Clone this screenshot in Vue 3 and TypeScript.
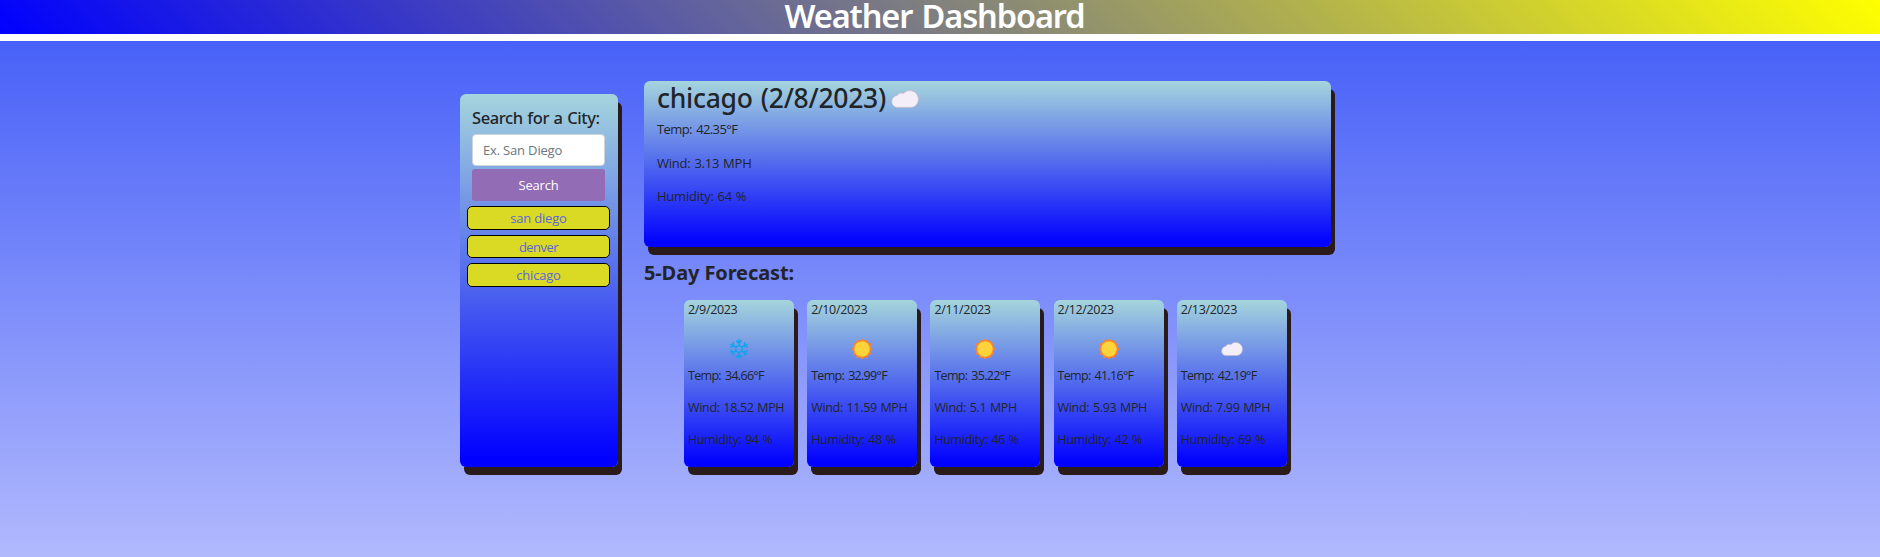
<script setup lang="ts">
import { ref } from 'vue'

type Sky = 'snow' | 'sun' | 'cloud'

interface Forecast {
  date: string
  sky: Sky
  temp: string
  wind: string
  humidity: number
}

const query = ref('')
const history = ref<string[]>(['san diego', 'denver', 'chicago'])
const forecast: Forecast[] = [
  { date: '2/9/2023', sky: 'snow', temp: '34.66', wind: '18.52', humidity: 94 },
  { date: '2/10/2023', sky: 'sun', temp: '32.99', wind: '11.59', humidity: 48 },
  { date: '2/11/2023', sky: 'sun', temp: '35.22', wind: '5.1', humidity: 46 },
  { date: '2/12/2023', sky: 'sun', temp: '41.16', wind: '5.93', humidity: 42 },
  { date: '2/13/2023', sky: 'cloud', temp: '42.19', wind: '7.99', humidity: 69 },
]

const arms = [0, 60, 120, 180, 240, 300]

// Twelve-pointed outline behind the sun disc
const sunPoints = Array.from({ length: 24 }, (_, i) => {
  const r = i % 2 ? 8.7 : 10.4
  const a = (i * Math.PI) / 12
  return `${(10 + r * Math.sin(a)).toFixed(2)},${(10 - r * Math.cos(a)).toFixed(2)}`
}).join(' ')
</script>

<template>
  <div class="page">
    <header class="banner"><h1>Weather Dashboard</h1></header>
    <main class="layout">
      <aside class="panel search">
        <h2>Search for a City:</h2>
        <input v-model="query" type="text" placeholder="Ex. San Diego" />
        <button class="submit" type="button">Search</button>
        <div class="history">
          <button v-for="city in history" :key="city" type="button" :class="city">{{ city }}</button>
        </div>
      </aside>
      <section class="weather">
        <article class="panel current">
          <h2>
            <span>chicago (2/8/2023)</span>
            <svg class="big-cloud" viewBox="0 0 28 18">
              <path d="M6 17.4C2.8 17.2.7 14.8.7 11.8c0-3.4 2.3-6.2 5.4-6.3C7 3.6 9.5 2.5 11.4 3.2 12.8 3.6 13.2 2.8 14.2 1.9 15.6.8 17.2.6 18.8.6c5.1 0 8.6 4 8.6 8.5 0 5.2-3.2 8.3-7.6 8.3Z" />
            </svg>
          </h2>
          <p class="temp">Temp: 42.35°F</p>
          <p class="wind">Wind: 3.13 MPH</p>
          <p class="humidity">Humidity: 64 %</p>
        </article>
        <h3>5-Day Forecast:</h3>
        <div class="days">
          <article v-for="day in forecast" :key="day.date" class="panel day">
            <p class="date">{{ day.date }}</p>
            <div class="sky">
              <svg v-if="day.sky === 'snow'" class="snow" viewBox="0 0 20 20">
                <g v-for="arm in arms" :key="arm" :transform="`rotate(${arm} 10 10)`">
                  <path d="M10 6.4V.1M7.1 1.4 10 4.3l2.9-2.9M10 6.4l3.12 1.8" />
                </g>
              </svg>
              <svg v-else-if="day.sky === 'sun'" class="sun" viewBox="0 0 20 20">
                <polygon :points="sunPoints" />
                <circle cx="10" cy="10" r="7.7" />
              </svg>
              <svg v-else class="small-cloud" viewBox="0 0 28 18">
                <path d="M6 17.4C2.8 17.2.7 14.8.7 11.8c0-3.4 2.3-6.2 5.4-6.3C7 3.6 9.5 2.5 11.4 3.2 12.8 3.6 13.2 2.8 14.2 1.9 15.6.8 17.2.6 18.8.6c5.1 0 8.6 4 8.6 8.5 0 5.2-3.2 8.3-7.6 8.3Z" />
              </svg>
            </div>
            <p class="temp">Temp: {{ day.temp }}°F</p>
            <p class="wind">Wind: {{ day.wind }} MPH</p>
            <p class="humidity">Humidity: {{ day.humidity }} %</p>
          </article>
        </div>
      </section>
    </main>
  </div>
</template>

<style>
body {
  margin: 0;
}
</style>

<style scoped>
.page,
.page * {
  box-sizing: border-box;
}
.page {
  height: 557px;
  display: flex;
  flex-direction: column;
  background: #fff;
  color: #212529;
  font: 400 13px/20px "Open Sans", "Noto Sans", sans-serif;
}
h1,
h2,
h3,
p {
  margin: 0;
}
h1,
h2,
h3 {
  font-family: "Noto Sans", sans-serif;
  font-weight: 500;
  white-space: nowrap;
}
.banner {
  height: 34px;
  margin-bottom: 7px;
  padding-right: 11px;
  background: linear-gradient(45deg, #0000ff, #ffff00);
  color: #fff;
  text-align: center;
}
h1 {
  font-size: 32.5px;
  font-weight: 600;
  line-height: 32px;
  letter-spacing: -1.1px;
  word-spacing: 2px;
}
.layout {
  flex: 1;
  display: flex;
  align-items: flex-start;
  gap: 26px;
  padding: 40px 0 0 460px;
  background: linear-gradient(#4861f8, #b1b9fd);
}
.panel {
  border-radius: 6px;
  background: linear-gradient(#a5d5dc, #0000ff 98%);
  box-shadow: 4px 8px 0 #2a1a1a;
}
.search {
  width: 158px;
  height: 373px;
  margin-top: 13px;
  padding: 12px 13px 0 12px;
  display: flex;
  flex-direction: column;
}
.search h2 {
  height: 28px;
  font-size: 16.5px;
  line-height: 24px;
  letter-spacing: -0.4px;
  word-spacing: 0.7px;
}
input {
  width: 133px;
  height: 32px;
  padding: 0 10px;
  border: 1px solid #ced4da;
  border-radius: 4px;
  background: #fff;
  font: inherit;
  letter-spacing: -0.175px;
}
input::placeholder {
  color: #6c757d;
  opacity: 1;
}
button {
  padding: 0;
  font: inherit;
  letter-spacing: -0.2px;
}
.submit {
  height: 32px;
  margin-top: 3px;
  border: 0;
  border-radius: 3px;
  background: #926cb4;
  color: #fff;
}
.history {
  display: flex;
  flex-direction: column;
  gap: 5px;
  margin: 5px -5px 0;
}
.history button {
  height: 23.7px;
  border: 1px solid #000;
  border-radius: 5px;
  background: #dada24;
  color: #5b67dc;
  line-height: 18px;
}
.history .denver {
  letter-spacing: -0.55px;
}
.weather {
  width: 687px;
}
.current {
  height: 166px;
  padding: 0 13px;
}
.current h2 {
  display: flex;
  gap: 5px;
  height: 38px;
  font-size: 26.5px;
  line-height: 35px;
  letter-spacing: -0.27px;
  word-spacing: 1.5px;
}
.current p {
  height: 33.5px;
  line-height: 20px;
}
.current .temp {
  letter-spacing: -0.6px;
  word-spacing: 1.5px;
}
.current .wind,
.current .humidity {
  letter-spacing: -0.22px;
  word-spacing: 0.7px;
}
svg {
  display: block;
  flex: none;
}
.big-cloud {
  width: 28px;
  height: 18px;
  margin-top: 9px;
}
.small-cloud {
  width: 22px;
  height: 14px;
}
.big-cloud path,
.small-cloud path {
  fill: #f3eef8;
  stroke: #c6b9ca;
  stroke-width: 0.9;
}
.snow,
.sun {
  width: 20px;
  height: 20px;
}
.snow path {
  fill: none;
  stroke: #0ca6ee;
  stroke-width: 1.35;
}
.sun polygon {
  fill: #ff822d;
}
.sun circle {
  fill: #ffd43b;
}
h3 {
  height: 53px;
  padding-top: 12px;
  font-size: 20px;
  font-weight: 700;
  line-height: 28px;
  letter-spacing: -0.11px;
}
.days {
  display: flex;
  gap: 13.2px;
  padding-left: 40px;
}
.day {
  width: 110px;
  height: 167px;
  padding: 1px 4px 0;
  font-size: 12.5px;
  white-space: nowrap;
}
.day p {
  height: 32px;
  line-height: 18px;
}
.day .date {
  height: 38px;
  letter-spacing: -0.33px;
}
.sky {
  height: 28px;
  display: flex;
  justify-content: center;
  align-items: flex-start;
}
.small-cloud {
  margin-top: 3px;
}
.day .temp {
  letter-spacing: -0.7px;
  word-spacing: 1.5px;
}
.day .wind,
.day .humidity {
  letter-spacing: -0.32px;
  word-spacing: 0.7px;
}
</style>
